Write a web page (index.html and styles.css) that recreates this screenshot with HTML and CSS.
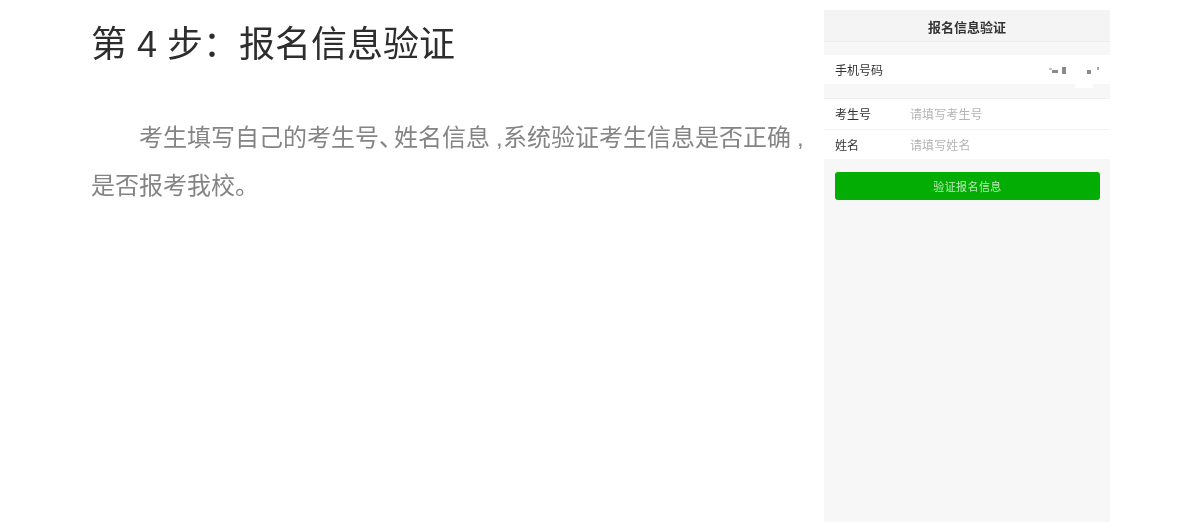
FILE: index.html
```html
<!DOCTYPE html>
<html lang="zh-CN">
<head>
    <meta charset="UTF-8">
    <title>报名信息验证</title>
    <link rel="stylesheet" href="styles.css">
</head>
<body>
    <div class="page">
        <div class="content">
            <h1>第 4 步：报名信息验证</h1>
            <p>考生填写自己的考生号<span class="dun">、</span>姓名信息<span class="comma">,</span>系统验证考生信息是否正确<span class="comma">,</span>是否报考我校。</p>
        </div>
        <div class="phone">
            <div class="phone-title">报名信息验证</div>
            <div class="row row-mobile">
                <span class="row-label">手机号码</span>
                <span class="mask"></span>
                <i class="dot dot-a"></i>
                <i class="dot dot-b"></i>
                <i class="dot dot-c"></i>
                <i class="dot dot-d"></i>
                <i class="dot dot-e"></i>
            </div>
            <div class="group">
                <div class="row">
                    <span class="row-label">考生号</span>
                    <span class="row-hint">请填写考生号</span>
                </div>
                <div class="row">
                    <span class="row-label">姓名</span>
                    <span class="row-hint">请填写姓名</span>
                </div>
            </div>
            <button class="verify">验证报名信息</button>
        </div>
    </div>
</body>
</html>
```

FILE: styles.css
```css
body {
    margin: 0;
    background: #fff;
    font-family: "Liberation Sans", "Noto Sans CJK SC", sans-serif;
}
.page {
    display: flex;
    height: 531px;
    padding: 10px 90px 9px 91px;
    box-sizing: border-box;
    overflow: hidden;
}
.content {
    width: 715px;
    margin-right: 18px;
    filter: blur(0.3px);
}
h1 {
    margin: 9px 0 0;
    font-size: 36px;
    line-height: 52px;
    font-weight: 400;
    color: #2e2e2e;
}
p {
    margin: 43px 0 0;
    font-size: 24px;
    line-height: 48px;
    text-indent: 48px;
    color: #848484;
}
.dun {
    display: inline-block;
    padding-right: 3px;
    text-indent: 0;
    font-feature-settings: "halt";
}
.comma {
    display: inline-block;
    width: 13px;
    padding-left: 6px;
    box-sizing: border-box;
    text-indent: 0;
}
.phone {
    width: 286px;
    background: #f7f7f7;
    filter: blur(0.6px);
}
.phone-title {
    height: 31px;
    line-height: 35px;
    text-align: center;
    font-size: 13px;
    font-weight: 700;
    color: #333;
    background: #f4f4f4;
    border-bottom: 1px solid #ececec;
}
.row {
    display: flex;
    align-items: center;
    height: 29px;
    padding-left: 11px;
    font-size: 12px;
    color: #333;
    background: #fff;
}
.row-mobile {
    position: relative;
    margin-top: 13px;
}
.group {
    margin-top: 14px;
    border-top: 1px solid #eee;
}
.group .row {
    height: 28px;
    padding-bottom: 2px;
    border-bottom: 1px solid #f0f0f0;
}
.group .row:last-child {
    height: 29px;
    padding-bottom: 0;
    border-bottom: 0;
}
.row-label {
    width: 75px;
    flex: none;
}
.row-hint {
    font-size: 12px;
    letter-spacing: 0.1px;
    color: #b4b4b4;
}
.mask {
    position: absolute;
    left: 251px;
    top: 3px;
    width: 18px;
    height: 30px;
    background: #fff;
}
.dot {
    position: absolute;
    background: #8a8a8a;
}
.dot-a {
    left: 225px;
    top: 13px;
    width: 3px;
    height: 2px;
    background: #c4c4c4;
}
.dot-b {
    left: 228px;
    top: 15px;
    width: 6px;
    height: 3px;
}
.dot-c {
    left: 238px;
    top: 12px;
    width: 4px;
    height: 7px;
}
.dot-d {
    left: 263px;
    top: 15px;
    width: 4px;
    height: 4px;
}
.dot-e {
    left: 273px;
    top: 12px;
    width: 2px;
    height: 3px;
    background: #aaa;
}
.verify {
    display: block;
    width: 265px;
    height: 28px;
    margin: 13px 0 0 11px;
    padding: 0;
    border: 0;
    border-radius: 3px;
    background: #04ad04;
    color: #b9e8b9;
    font-family: inherit;
    font-size: 11px;
    letter-spacing: 0.4px;
}
```
